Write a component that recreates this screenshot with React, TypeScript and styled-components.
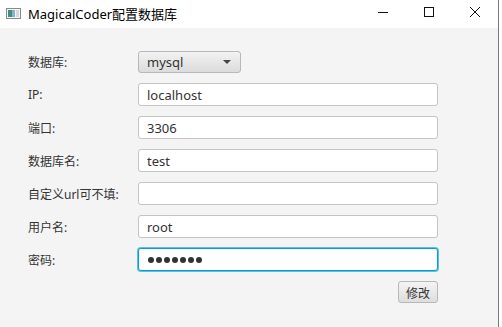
import { createGlobalStyle, styled } from "styled-components";

const GlobalStyle = createGlobalStyle`
    html, body {
        margin: 0;
        padding: 0;
        background: #ffffff;
    }
    body {
        font-family: "Noto Sans", "Noto Sans CJK SC", sans-serif;
    }
`;

const fields = [
    { label: "IP:", value: "localhost" },
    { label: "端口:", value: "3306" },
    { label: "数据库名:", value: "test" },
    { label: "自定义url可不填:", value: "" },
    { label: "用户名:", value: "root" },
];

export default function App()
{
    return (
        <>
            <GlobalStyle/>
            <Window>
                <TitleBar>
                    <AppIcon width="15" height="11" viewBox="0 0 15 11">
                        <rect x="0.5" y="0.5" width="14" height="10" fill="#f4f4f4" stroke="#8a8a8a"/>
                        <rect x="2" y="2" width="4" height="7" fill="#3f8f7a"/>
                        <rect x="6" y="2" width="3" height="7" fill="#7fb3d6"/>
                        <rect x="10" y="2" width="3" height="7" fill="#d9d9d9"/>
                    </AppIcon>
                    <Title>MagicalCoder配置数据库</Title>
                    <Caption>
                        <CaptionButton>
                            <svg width="10" height="10" viewBox="0 0 10 10">
                                <path d="M0 5.5h10" stroke="#111" strokeWidth="1"/>
                            </svg>
                        </CaptionButton>
                        <CaptionButton>
                            <svg width="10" height="10" viewBox="0 0 10 10">
                                <rect x="0.5" y="0.5" width="9" height="9" fill="none" stroke="#111"/>
                            </svg>
                        </CaptionButton>
                        <CaptionButton>
                            <svg width="10" height="10" viewBox="0 0 10 10">
                                <path d="M0 0L10 10M10 0L0 10" stroke="#111" strokeWidth="1"/>
                            </svg>
                        </CaptionButton>
                    </Caption>
                </TitleBar>

                <Content>
                    <Form>
                        <Label>数据库:</Label>
                        <Combo>
                            <span>mysql</span>
                            <Arrow/>
                        </Combo>

                        {fields.map(f => (
                            <Row key={f.label}>
                                <Label>{f.label}</Label>
                                <Field>{f.value}</Field>
                            </Row>
                        ))}

                        <Label>密码:</Label>
                        <Field $focused>
                            <Dots>
                                {Array.from({ length: 7 }).map((_, i) => <Dot key={i}/>)}
                            </Dots>
                        </Field>

                        <Actions>
                            <Button>修改</Button>
                        </Actions>
                    </Form>
                </Content>
            </Window>
        </>
    );
}

const Window = styled.div`
    width: 498px;
    height: 327px;
    display: flex;
    flex-direction: column;
    border-right: 1px solid #7a7a7a;
`;

const TitleBar = styled.div`
    height: 28px;
    flex-shrink: 0;
    background: #ffffff;
    display: flex;
    align-items: center;
    padding-left: 6px;
`;

const AppIcon = styled.svg`
    margin-right: 7px;
    margin-top: -1px;
`;

const Title = styled.span`
    font-size: 13px;
    color: #000;
    flex: 1;
    margin-top: -2px;
`;

const Caption = styled.div`
    display: flex;
    height: 100%;
`;

const CaptionButton = styled.div`
    width: 46px;
    display: flex;
    align-items: center;
    justify-content: center;
    margin-top: -4px;
`;

const Content = styled.div`
    flex: 1;
    background: #f4f4f4;
    padding: 23px 0 0 28px;
`;

const Form = styled.div`
    display: grid;
    grid-template-columns: 110px 300px;
    row-gap: 10px;
    align-items: center;
`;

const Row = styled.div`
    display: contents;
`;

const Label = styled.span`
    font-size: 12px;
    color: #333;
`;

const Combo = styled.div`
    width: 103px;
    height: 22px;
    box-sizing: border-box;
    border: 1px solid #b8b8b8;
    border-radius: 3px;
    background: linear-gradient(#f2f2f2, #dcdcdc);
    display: flex;
    align-items: center;
    justify-content: space-between;
    padding: 0 9px 0 8px;
    font-size: 13px;
    color: #333;
`;

const Arrow = styled.span`
    width: 0;
    height: 0;
    border-left: 4px solid transparent;
    border-right: 4px solid transparent;
    border-top: 4px solid #444;
`;

const Field = styled.div<{ $focused?: boolean }>`
    height: 23px;
    box-sizing: border-box;
    background: #fff;
    border: 1px solid ${p => p.$focused ? "#039ed3" : "#c4c4c4"};
    box-shadow: ${p => p.$focused ? "0 0 0 1px #5fbfe3" : "none"};
    border-radius: 3px;
    padding: 0 8px;
    display: flex;
    align-items: center;
    font-size: 13px;
    color: #333;
`;

const Dots = styled.span`
    display: flex;
    gap: 2px;
    padding-left: 1px;
`;

const Dot = styled.span`
    width: 6px;
    height: 6px;
    border-radius: 50%;
    background: #333;
`;

const Actions = styled.div`
    grid-column: 2;
    display: flex;
    justify-content: flex-end;
`;

const Button = styled.button`
    width: 40px;
    height: 22px;
    border: 1px solid #b8b8b8;
    border-radius: 3px;
    background: linear-gradient(#f4f4f4, #dedede);
    font-family: "Noto Sans CJK SC", sans-serif;
    font-size: 12px;
    color: #333;
    padding: 0;
`;
